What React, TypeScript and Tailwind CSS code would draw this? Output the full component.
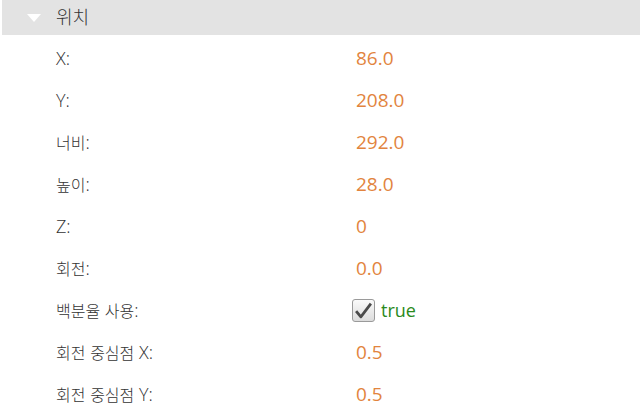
import React from 'react';

const rows: { label: string; value: string; kind?: 'bool' }[] = [
    { label: 'X:', value: '86.0' },
    { label: 'Y:', value: '208.0' },
    { label: '너비:', value: '292.0' },
    { label: '높이:', value: '28.0' },
    { label: 'Z:', value: '0' },
    { label: '회전:', value: '0.0' },
    { label: '백분율 사용:', value: 'true', kind: 'bool' },
    { label: '회전 중심점 X:', value: '0.5' },
    { label: '회전 중심점 Y:', value: '0.5' },
];

// hangul runs get a smaller size than latin so widths line up with the original
const Label: React.FC<{ text: string }> = ({ text }) => {
    const parts = text.match(/[\uac00-\ud7a3]+|[^\uac00-\ud7a3]+/g) || [];
    return (
        <>
            {parts.map((p, i) =>
                /[\uac00-\ud7a3]/.test(p) ? (
                    <span key={i} className="text-[16px]">{p}</span>
                ) : (
                    <span key={i} className="text-[18px]">{p}</span>
                )
            )}
        </>
    );
};

const Check: React.FC = () => (
    <div className="w-[23px] h-[23px] rounded-[3px] border border-[#9a9a9a] bg-gradient-to-b from-[#fafafa] to-[#dcdcdc] flex items-center justify-center mr-[6px]">
        <svg width="19" height="17" viewBox="0 0 18 16">
            <path d="M2 8.5 L6.5 14 L16 1.5" fill="none" stroke="#4a4a4a" strokeWidth="2.6" strokeLinejoin="round" />
        </svg>
    </div>
);

const App: React.FC = () => {
    return (
        <div
            className="w-[640px] h-[413px] bg-white overflow-hidden text-[#333] font-light"
            style={{ fontFamily: '"Open Sans", "Noto Sans CJK KR", sans-serif' }}
        >
            {/* section header */}
            <div className="ml-[2px] h-[35px] bg-[#e3e3e3] flex items-center">
                <svg width="14" height="10" viewBox="0 0 14 10" className="ml-[25px] mt-[2px]">
                    <path d="M0 0 L14 0 L7 8 Z" fill="#ffffff" />
                </svg>
                <span className="ml-[15px] text-[18px]">위치</span>
            </div>

            <div className="pt-[2px]">
                {rows.map((r) => (
                    <div key={r.label} className="h-[42px] flex items-center">
                        <div className="w-[356px] pl-[56px] leading-none">
                            <Label text={r.label} />
                        </div>
                        {r.kind === 'bool' ? (
                            <div className="flex items-center -ml-[4px]">
                                <Check />
                                <span className="text-[#2a8a1c] text-[18px] font-normal leading-none">{r.value}</span>
                            </div>
                        ) : (
                            <div className="text-[#e2843e] text-[19px] font-normal leading-none">{r.value}</div>
                        )}
                    </div>
                ))}
            </div>
        </div>
    );
};

export default App;
